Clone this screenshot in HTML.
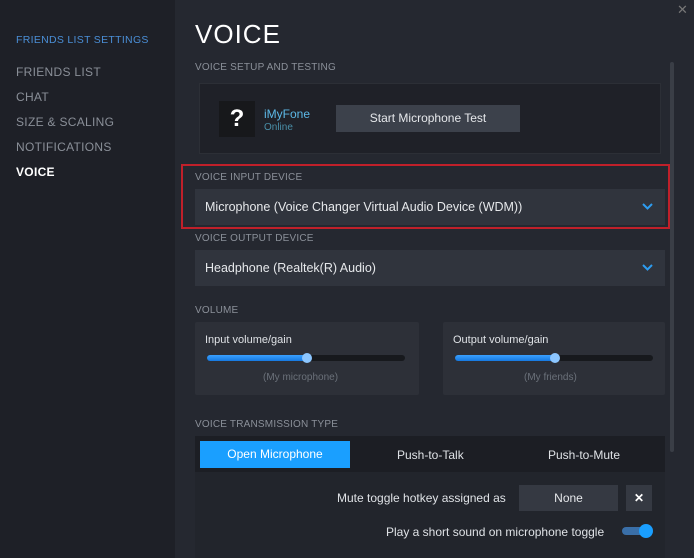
<!DOCTYPE html>
<html><head><style>
*{margin:0;padding:0;box-sizing:border-box}
body{width:694px;height:558px;overflow:hidden;background:#252830;font-family:"Liberation Sans",sans-serif;position:relative}
.a{position:absolute}
.side{left:0;top:0;width:175px;height:558px;background:#1e2027}
.nav{left:16px;font-size:12px;color:#8a8f98;letter-spacing:.3px}
.lab{left:195px;font-size:10px;color:#8b9099;letter-spacing:.2px}
.dd{background:#30343d;color:#e6e8eb;font-size:12.5px;padding-left:10px;line-height:36px}
.chev{position:absolute;right:12px;top:14px}
.vb{background:#2d3038;border-radius:2px}
.track{height:6px;background:#17191d;border-radius:3px}
.fill{height:6px;background:linear-gradient(#3aa0ff,#1679e0);border-radius:3px}
.knob{width:10px;height:10px;border-radius:5px;background:#8cc6ff}
.t{font-size:12px;color:#dfe2e6}
</style></head><body>
<div class="a side"></div>
<div class="a nav" style="top:34px;color:#4a8ed6;font-size:10.5px">FRIENDS LIST SETTINGS</div>
<div class="a nav" style="top:65px">FRIENDS LIST</div>
<div class="a nav" style="top:90px">CHAT</div>
<div class="a nav" style="top:115px">SIZE &amp; SCALING</div>
<div class="a nav" style="top:140px">NOTIFICATIONS</div>
<div class="a nav" style="top:165px;color:#fff;font-weight:bold">VOICE</div>
<div class="a" style="left:677px;top:2px;color:#777;font-size:13px">✕</div>
<div class="a" style="left:670px;top:62px;width:4px;height:390px;background:#3a3e46;border-radius:2px"></div>
<div class="a" style="left:195px;top:19px;font-size:26px;color:#fff;letter-spacing:1px">VOICE</div>
<div class="a lab" style="top:62px">VOICE SETUP AND TESTING</div>
<div class="a" style="left:199px;top:83px;width:462px;height:71px;background:#1f2128;border:1px solid #2c2f36"></div>
<div class="a" style="left:219px;top:101px;width:36px;height:36px;background:#17181b;color:#fff;font-size:24px;font-weight:bold;text-align:center;line-height:36px">?</div>
<div class="a" style="left:264px;top:107px;font-size:12px;color:#5cb8e6">iMyFone</div>
<div class="a" style="left:264px;top:122px;font-size:10px;color:#4a8fa8">Online</div>
<div class="a" style="left:336px;top:105px;width:184px;height:27px;background:#3c414b;color:#e6e8eb;font-size:12px;text-align:center;line-height:27px">Start Microphone Test</div>
<div class="a" style="left:181px;top:164px;width:489px;height:65px;border:2px solid #c0202a"></div>
<div class="a lab" style="top:172px">VOICE INPUT DEVICE</div>
<div class="a dd" style="left:195px;top:189px;width:470px;height:36px">Microphone (Voice Changer Virtual Audio Device (WDM))<svg class="chev" width="11" height="7" viewBox="0 0 11 7"><path d="M1 1l4.5 4.5L10 1" stroke="#2d9cf0" stroke-width="2" fill="none"/></svg></div>
<div class="a lab" style="top:233px">VOICE OUTPUT DEVICE</div>
<div class="a dd" style="left:195px;top:250px;width:470px;height:36px">Headphone (Realtek(R) Audio)<svg class="chev" width="11" height="7" viewBox="0 0 11 7"><path d="M1 1l4.5 4.5L10 1" stroke="#2d9cf0" stroke-width="2" fill="none"/></svg></div>
<div class="a lab" style="top:305px">VOLUME</div>
<div class="a vb" style="left:195px;top:322px;width:224px;height:73px"></div>
<div class="a vb" style="left:443px;top:322px;width:222px;height:73px"></div>
<div class="a t" style="left:205px;top:334px;font-size:11px">Input volume/gain</div>
<div class="a t" style="left:453px;top:334px;font-size:11px">Output volume/gain</div>
<div class="a track" style="left:207px;top:355px;width:198px"></div>
<div class="a fill" style="left:207px;top:355px;width:100px"></div>
<div class="a knob" style="left:302px;top:353px"></div>
<div class="a track" style="left:455px;top:355px;width:198px"></div>
<div class="a fill" style="left:455px;top:355px;width:100px"></div>
<div class="a knob" style="left:550px;top:353px"></div>
<div class="a" style="left:263px;top:372px;font-size:10px;color:#6b717a">(My microphone)</div>
<div class="a" style="left:524px;top:372px;font-size:10px;color:#6b717a">(My friends)</div>
<div class="a lab" style="top:419px">VOICE TRANSMISSION TYPE</div>
<div class="a" style="left:195px;top:436px;width:470px;height:36px;background:#1c1e24"></div>
<div class="a" style="left:195px;top:472px;width:470px;height:86px;background:#22252c"></div>
<div class="a" style="left:200px;top:441px;width:150px;height:27px;background:#1a9fff;color:#fff;font-size:12px;text-align:center;line-height:27px">Open Microphone</div>
<div class="a t" style="left:397px;top:448px">Push-to-Talk</div>
<div class="a t" style="left:548px;top:448px">Push-to-Mute</div>
<div class="a t" style="left:337px;top:491px">Mute toggle hotkey assigned as</div>
<div class="a" style="left:519px;top:485px;width:99px;height:26px;background:#353942;color:#e6e8eb;font-size:12px;text-align:center;line-height:26px">None</div>
<div class="a" style="left:626px;top:485px;width:26px;height:26px;background:#353942;color:#fff;font-size:12px;font-weight:bold;text-align:center;line-height:26px">✕</div>
<div class="a t" style="left:386px;top:525px">Play a short sound on microphone toggle</div>
<div class="a" style="left:622px;top:527px;width:30px;height:8px;border-radius:4px;background:#3a6fa8"></div>
<div class="a" style="left:639px;top:524px;width:14px;height:14px;border-radius:7px;background:#1a9fff"></div>
</body></html>
